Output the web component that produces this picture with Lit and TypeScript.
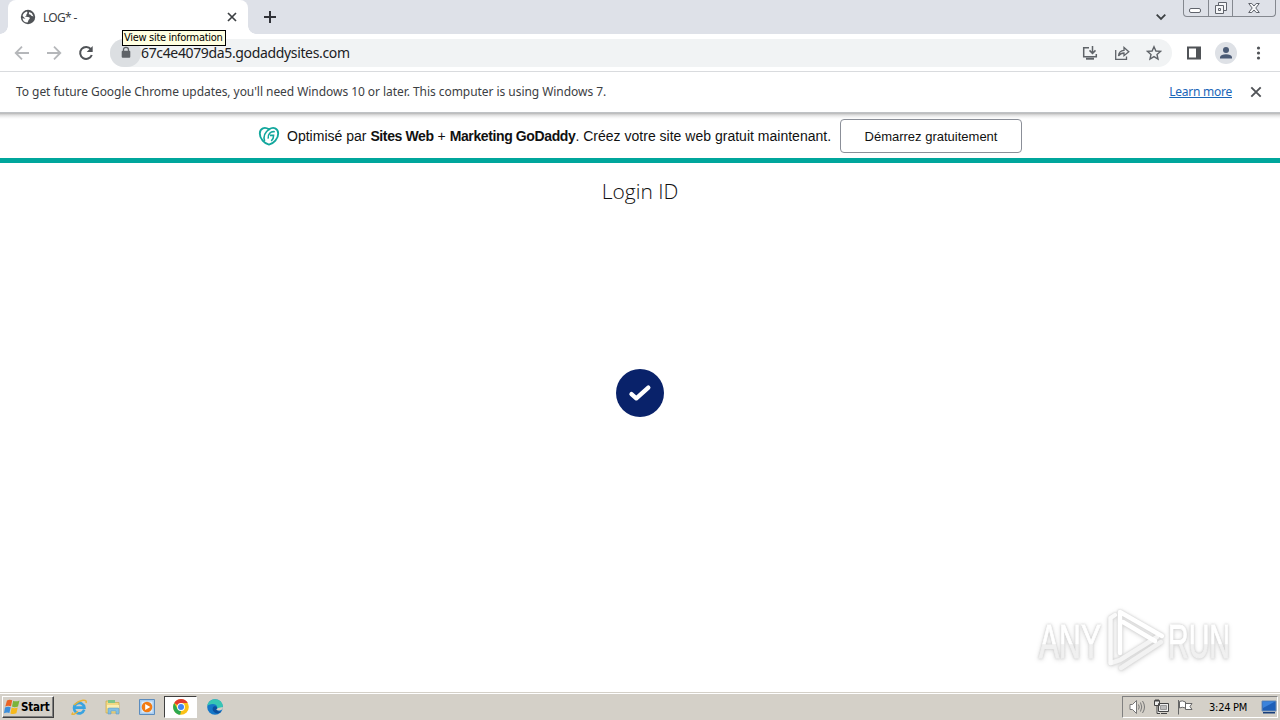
import { LitElement, html, css, svg } from "lit";
import { customElement } from "lit/decorators.js";

/** Page shown in the browser viewport: promo banner, title and check badge. */
@customElement("site-page")
export class SitePage extends LitElement {
  static styles = css`
    :host {
      display: flex;
      flex-direction: column;
      flex: 1;
      min-height: 0;
      background: #fff;
      color: #111;
      font-family: "Liberation Sans", Arial, sans-serif;
    }

    svg {
      display: block;
      flex: none;
    }

    .banner {
      display: flex;
      align-items: center;
      box-sizing: border-box;
      height: 50px;
      padding: 1px 0 0 258px;
      border-bottom: 5px solid #00a69c;
      white-space: nowrap;
      background: linear-gradient(#b4b4b4 0, #dedede 2px, #f3f3f3 4px, #fff 6px);
    }

    .text {
      width: 543px;
      margin-left: 7px;
      font-size: 14px;
      letter-spacing: 0.01px;
    }

    .text b {
      letter-spacing: -0.38px;
    }

    .cta {
      box-sizing: border-box;
      width: 182px;
      height: 34px;
      margin-left: 10px;
      padding: 0;
      border: 1px solid #8b8f98;
      border-radius: 4px;
      background: #fff;
      color: #111;
      font: 13px "Liberation Sans", Arial, sans-serif;
      letter-spacing: 0;
    }

    h1 {
      margin: 14px 0 0;
      text-align: center;
      font: 300 21px/28px "Open Sans", sans-serif;
      letter-spacing: 0;
    }

    .badge {
      margin: 164px auto 0;
    }
  `;

  render() {
    return html`
      <div class="banner">
        <svg width="22" height="20" viewBox="0 0 22 20" fill="none" stroke="#12a79d" stroke-width="1.9">
          <path d="M11 18.6C6.5 17.8 1.6 12.7 1.8 7.4C2 2.2 6.6 .4 11 3.4C15.4 .4 20 2.2 20.2 7.4C20.4 12.7 15.5 17.8 11 18.6Z" />
          <path d="M11 3.4C7 6.2 5.2 10.6 6.6 15M16.8 5.8C12.6 5 9.6 8.4 10.2 12.6M12 9.4H15.6C15.7 11.6 14.8 13.6 13.2 15" stroke-width="1.6" />
        </svg>
        <span class="text">Optimisé par <b>Sites Web</b> + <b>Marketing GoDaddy</b>. Créez votre site web gratuit maintenant.</span>
        <button class="cta">Démarrez gratuitement</button>
      </div>
      <h1>Login ID</h1>
      <svg class="badge" width="48" height="48" viewBox="0 0 48 48">
        <circle cx="24" cy="24" r="24" fill="#09226a" />
        <path d="M15.5 25.2L20.3 29.3L32.3 18.7" fill="none" stroke="#fff" stroke-width="4.4" stroke-linecap="round" stroke-linejoin="round" />
      </svg>
    `;
  }
}

/** Translucent ANY ▷ RUN mark floating over the page. */
@customElement("water-mark")
export class WaterMark extends LitElement {
  static styles = css`
    :host {
      display: flex;
      align-items: center;
      filter: drop-shadow(0 0 1px #ccc) drop-shadow(0 1px 2px #ddd);
      font: 48px/60px "Liberation Sans", Arial, sans-serif;
    }

    .word {
      width: 66px;
      height: 64px;
      overflow: visible;
    }

    text {
      fill: url(#fade);
      stroke: url(#fade);
      stroke-width: 1;
    }

    .play {
      margin: 0 1px 0 2px;
    }
  `;

  private renderWord(word: string) {
    return html`
      <svg class="word" viewBox="0 0 66 64">
        <linearGradient id="fade" x1="0" y1="0" x2="0" y2="1">
          <stop offset=".54" stop-color="#fff" />
          <stop offset=".56" stop-color="#f0f0f0" />
        </linearGradient>
        <text x="1" y="50" textLength="62" lengthAdjust="spacingAndGlyphs">${word}</text>
      </svg>
    `;
  }

  render() {
    return html`
      ${this.renderWord("ANY")}
      <svg class="play" width="60" height="64" viewBox="0 0 60 64" fill="none" stroke-width="4.5" stroke-linejoin="round" stroke-linecap="round">
        <path d="M15 60L55 34" stroke="#f2f2f2" />
        <path d="M5 55L14 52L51 29" stroke="#f4f4f4" />
        <path d="M4.5 55V10L9 7" stroke="#fafafa" />
        <path d="M14 45V4L56 28M17 14L49 33" stroke="#fff" />
      </svg>
      ${this.renderWord("RUN")}
    `;
  }
}

/** Classic grey taskbar with launchers and tray. */
@customElement("task-bar")
export class TaskBar extends LitElement {
  static styles = css`
    :host {
      display: flex;
      align-items: center;
      box-sizing: border-box;
      height: 28px;
      padding: 2px 2px 0 2px;
      background: linear-gradient(#d4d0c8 1px, #fff 1px, #fff 2px, #d4d0c8 2px);
      font: 11px "DejaVu Sans Condensed", "DejaVu Sans", sans-serif;
      color: #000;
    }

    svg {
      display: block;
      flex: none;
    }

    .start {
      display: flex;
      align-items: center;
      gap: 1px;
      box-sizing: border-box;
      width: 52px;
      height: 22px;
      padding: 0 0 0 1px;
      border: 1px solid;
      border-color: #fff #404040 #404040 #fff;
      box-shadow: inset -1px -1px #808080;
      font-weight: bold;
      font-size: 11.5px;
      letter-spacing: -0.2px;
    }

    .apps {
      display: flex;
      align-items: center;
      margin-left: 8px;
      gap: 1px;
    }

    .app {
      display: grid;
      place-items: center;
      box-sizing: border-box;
      width: 33px;
      height: 22px;
    }

    .app.active {
      border: 1px solid;
      border-color: #404040 #fff #fff #404040;
      background: #fff;
    }

    .tray {
      display: flex;
      align-items: center;
      box-sizing: border-box;
      width: 156px;
      height: 22px;
      margin-left: auto;
      padding-left: 6px;
      border: 1px solid;
      border-color: #808080 #fff #fff #808080;
      gap: 7px;
    }

    .clock {
      width: 40px;
      margin-left: 8px;
      letter-spacing: -0.25px;
      white-space: nowrap;
    }

    .desk {
      margin-left: 5px;
    }
  `;

  private icons = [
    svg`<path d="M13.2 10.7A5.2 5.2 0 1 1 13.4 8.6H4" fill="none" stroke="#39a3e0" stroke-width="2.6"/>
      <path d="M2 13.5C-.7 17 3 16 7 12.5M3 6C9 .7 16.5-.5 15 4" fill="none" stroke="#e9b43a" stroke-width="1.5"/>`,
    svg`<path d="M1 2H6L7 3.5H14V14H1Z" fill="#f2d982" stroke="#c9a94c" stroke-width=".7"/>
      <path d="M3 1H10V4H3Z" fill="#7fc58a"/><path d="M2 6H14V9H2Z" fill="#fbedb0"/>
      <path d="M3 15V10Q3 9 4 9H13Q14 9 14 10V15H11V12H6V15Z" fill="#82bfe3" stroke="#5794be" stroke-width=".5"/>`,
    svg`<path d="M.5.5H15.5V15.5H.5Z" fill="#a9cdf0" stroke="#5b8cbe"/>
      <path d="M2.5 2.5H13.5V13.5H2.5Z" fill="#dcebf8"/>
      <circle cx="8" cy="8" r="5.3" fill="#f27b13"/><path d="M6.2 4.9L11.3 8L6.2 11.1Z" fill="#fff"/>`,
    svg`<circle cx="8" cy="8" r="7.8" fill="#fbc116"/>
      <path d="M8 8L1.2 4A7.8 7.8 0 0 1 14.8 4H8Z" fill="#e33b2e"/>
      <path d="M1.2 4L4.6 10L8 12L7.2 15.8A7.8 7.8 0 0 1 1.2 4Z" fill="#2da94f"/>
      <circle cx="8" cy="8" r="3.9" fill="#fff"/><circle cx="8" cy="8" r="3" fill="#4285f4"/>`,
    svg`<circle cx="8" cy="8" r="7.8" fill="#1577c8"/>
      <path d="M.3 7C1 2.5 4.3.2 8 .2C12.6.2 15.8 3.6 15.8 7C15.8 10 13 11 10 10.5C11 8 9.5 5 6 5C3 5 1 6 .3 7Z" fill="#37c6b4"/>
      <path d="M10 10.5C11 8.5 9.3 6.8 7.5 7.2C5.4 7.8 5 10.5 6.6 12.6C8.4 15 11.7 15 14.6 12.4C12 13 9.9 12 10 10.5Z" fill="#0c4f9d"/>
      <path d="M9.2 10.5C10.5 12 13 12 15.6 10.2L15.9 8L11 9Z" fill="#d4d0c8"/>`,
  ];

  render() {
    return html`
      <div class="start">
        <svg width="16" height="16" viewBox="0 0 16 16">
          <path d="M3 1.5Q5.5 0 8.2 1.3L7 7.3Q4 6 1.3 7.5Z" fill="#ea6325" />
          <path d="M9.2 1.7Q12 3 15.5 1.4L14 7.4Q10.8 8.8 8 7.6Z" fill="#7bb43a" />
          <path d="M1 8.6Q4 7 6.7 8.3L5.4 14Q3 12.7 0 14.3Z" fill="#3c8edb" />
          <path d="M7.7 8.6Q10.5 9.8 13.7 8.4L12.4 14.2Q9.2 15.7 6.4 14.4Z" fill="#f6b91c" />
        </svg>
        <span>Start</span>
      </div>
      <div class="apps">
        ${this.icons.map(
          (icon, i) => html`<div class="app ${i === 3 ? "active" : ""}">
            <svg width="16" height="16" viewBox="0 0 16 16">${icon}</svg>
          </div>`
        )}
      </div>
      <div class="tray">
        <svg width="17" height="16" viewBox="0 0 17 16" fill="#fff" stroke="#777">
          <path d="M1 5.5H3.5L7.5 1.5V14.5L3.5 10.5H1Z" />
          <path d="M9.5 5.5Q11 8 9.5 10.5M11.5 3.5Q14 8 11.5 12.5M13.5 2Q17.5 8 13.5 14" fill="none" />
        </svg>
        <svg width="17" height="16" viewBox="0 0 17 16" fill="#eee" stroke="#444">
          <path d="M5.5 4.5H15.5V12.5H5.5ZM8 14.5H14M1.5 1.5H6.5V6.5H1.5ZM3 0V3M5 0V3M4 6.5V14.5H7" />
          <path d="M7.5 6.5H13.5V10.5H7.5Z" fill="#bbb" stroke="#999" />
        </svg>
        <svg width="17" height="16" viewBox="0 0 17 16" fill="#fff" stroke="#666">
          <path d="M1.5 1V15.5M2.5 2.5Q5 1 8.5 3V9Q5 7.5 2.5 9ZM8.5 4.5H15L13 7.5L15 10.5H8.5Z" />
        </svg>
        <span class="clock">3:24 PM</span>
        <svg class="desk" width="16" height="14" viewBox="0 0 16 14">
          <path d="M1 1H15V11H1Z" fill="#1e5fb8" stroke="#6d8db5" />
          <path d="M1.5 1.5H14L2 8Z" fill="#3b83dc" />
          <path d="M2 12H14V13.5H2Z" fill="#173e7a" />
        </svg>
      </div>
    `;
  }
}

@customElement("app-root")
export class AppRoot extends LitElement {
  static styles = css`
    :host {
      position: relative;
      display: flex;
      flex-direction: column;
      width: 1280px;
      height: 720px;
      overflow: hidden;
      background: #fff;
      color: #3c4043;
      font-family: "Noto Sans", sans-serif;
      white-space: nowrap;
    }

    svg {
      display: block;
      flex: none;
    }

    .tabs {
      display: flex;
      height: 34px;
      padding-left: 8px;
      background: #dee1e8;
    }

    .tab {
      position: relative;
      display: flex;
      align-items: center;
      box-sizing: border-box;
      width: 240px;
      padding: 0 10px 0 12px;
      border-radius: 8px 8px 0 0;
      background: #fff;
      font-size: 12px;
      letter-spacing: -0.7px;
    }

    .tab::before,
    .tab::after {
      content: "";
      position: absolute;
      bottom: 0;
      width: 8px;
      height: 8px;
    }

    .tab::before {
      left: -8px;
      background: radial-gradient(circle at 0 0, transparent 7.5px, #fff 8px);
    }

    .tab::after {
      right: -8px;
      background: radial-gradient(circle at 100% 0, transparent 7.5px, #fff 8px);
    }

    .title {
      flex: 1;
      margin-left: 7px;
    }

    .plus {
      margin: 10px 0 0 15px;
    }

    .chevron {
      margin: 11px 16px 0 auto;
    }

    .controls {
      display: flex;
      box-sizing: border-box;
      width: 93px;
      height: 17px;
      margin-right: 4px;
      border: 1px solid #84888f;
      border-top: 0;
      border-radius: 0 0 4px 4px;
    }

    .control {
      display: grid;
      place-items: center;
      width: 24px;
      border-right: 1px solid #84888f;
    }

    .control:last-child {
      width: 42px;
      border: 0;
    }

    .toolbar {
      display: flex;
      align-items: center;
      box-sizing: border-box;
      height: 38px;
      padding: 0 13px 0 14px;
      border-bottom: 1px solid #d9dbde;
    }

    .nav {
      display: flex;
      gap: 16px;
    }

    .address {
      display: flex;
      align-items: center;
      box-sizing: border-box;
      width: 1062px;
      height: 28px;
      margin-left: 16px;
      padding-right: 10px;
      border-radius: 14px;
      background: #f1f3f4;
      color: #202124;
    }

    .lock {
      display: grid;
      place-items: center;
      width: 31px;
      height: 28px;
      border-radius: 14px;
      background: #dcdfe2;
    }

    .url {
      flex: 1;
      font-size: 14px;
      letter-spacing: -0.35px;
    }

    .actions {
      display: flex;
      gap: 16px;
    }

    .panel {
      margin-left: 14px;
    }

    .avatar {
      margin-left: 13px;
    }

    .menu {
      margin: 0 0 0 auto;
    }

    .infobar {
      display: flex;
      align-items: center;
      box-sizing: border-box;
      height: 41px;
      padding: 0 18px 0 16px;
      border-bottom: 1px solid #bfc2c5;
      font-size: 12px;
    }

    .message {
      flex: 1;
      padding-bottom: 2px;
      letter-spacing: -0.052px;
    }

    .link {
      margin-right: 18px;
      padding-bottom: 2px;
      color: #1a66b8;
      letter-spacing: -0.25px;
      text-decoration: underline;
    }

    .tooltip {
      position: absolute;
      left: 122px;
      top: 30px;
      box-sizing: border-box;
      width: 104px;
      height: 16px;
      padding-left: 1px;
      border: 1px solid #000;
      background: #ffffe1;
      color: #000;
      font: 11px/14px "DejaVu Sans Condensed", "DejaVu Sans", sans-serif;
      letter-spacing: -0.3px;
    }

    .mark {
      position: absolute;
      left: 1038px;
      top: 608px;
    }
  `;

  private renderTabs() {
    return html`
      <div class="tabs">
        <div class="tab">
          <svg width="16" height="16" viewBox="0 0 16 16">
            <circle cx="8" cy="8" r="7.2" fill="#505357" />
            <path d="M7 2.4Q8.2 4 6.5 5.2Q7 7 4.8 7.5L9.4 8.2Q10.5 9.8 8.7 10.7L7.6 13.6Q3 13.4 2.5 9.2L5.5 9.7L2.6 7Q3 3.5 7 2.4ZM9.2 3L11.8 4.2L13.5 7.6L11.4 6.8L10.2 5.6L8.8 5.2Z" fill="#fff" />
          </svg>
          <span class="title">LOG* -</span>
          <svg width="12" height="12" viewBox="0 0 12 12" stroke="#3c4043" stroke-width="1.7">
            <path d="M2 2L10 10M10 2L2 10" />
          </svg>
        </div>
        <svg class="plus" width="14" height="14" viewBox="0 0 14 14" stroke="#303238" stroke-width="2">
          <path d="M7 1V13M1 7H13" />
        </svg>
        <svg class="chevron" width="12" height="12" viewBox="0 0 12 12" fill="none" stroke="#3c4043" stroke-width="1.8">
          <path d="M1.7 3.7L6 8L10.3 3.7" />
        </svg>
        <div class="controls">
          <div class="control">
            <svg width="13" height="16" viewBox="0 0 13 16" fill="#fff" stroke="#60646c">
              <rect x=".5" y="8.5" width="11" height="4" rx="1.5" />
            </svg>
          </div>
          <div class="control">
            <svg width="14" height="16" viewBox="0 0 14 16" fill="#f5f6f8" stroke="#60646c">
              <path d="M4.5 2.5H12.5V10.5H4.5Z" />
              <path d="M1.5 5.5H9.5V13.5H1.5ZM4.5 8.5H6.5V10.5H4.5Z" />
            </svg>
          </div>
          <div class="control">
            <svg width="12" height="16" viewBox="0 0 12 16" fill="#f5f6f8" stroke="#60646c">
              <path d="M.7 3.5H3.8L6 6L8.2 3.5H11.3L7.8 8L11.3 12.5H8.2L6 10L3.8 12.5H.7L4.2 8Z" />
            </svg>
          </div>
        </div>
      </div>
    `;
  }

  private renderToolbar() {
    return html`
      <div class="toolbar">
        <div class="nav">
          <svg width="16" height="16" viewBox="0 0 16 16" fill="none" stroke="#b5b7ba" stroke-width="1.8">
            <path d="M15 8H2M8 1.7L1.7 8L8 14.3" />
          </svg>
          <svg width="16" height="16" viewBox="0 0 16 16" fill="none" stroke="#b5b7ba" stroke-width="1.8">
            <path d="M1 8H14M8 1.7L14.3 8L8 14.3" />
          </svg>
          <svg width="16" height="16" viewBox="0 0 16 16">
            <path d="M12.9 4.2A6 6 0 1 0 13.8 10" fill="none" stroke="#505357" stroke-width="2" />
            <path d="M14.7 1V7H8.7Z" fill="#505357" />
          </svg>
        </div>
        <div class="address">
          <span class="lock">
            <svg width="10" height="13" viewBox="0 0 10 13">
              <path d="M2.5 6V3.8Q2.5 1.3 5 1.3Q7.5 1.3 7.5 3.8V6" fill="none" stroke="#5f6368" stroke-width="1.3" />
              <rect x=".7" y="4.8" width="8.6" height="7" rx="1" fill="#5f6368" />
            </svg>
          </span>
          <span class="url">67c4e4079da5.godaddysites.com</span>
          <div class="actions">
            <svg width="16" height="16" viewBox="0 0 16 16" fill="none" stroke="#5f6368" stroke-width="1.5">
              <path d="M7 2.7H1.7V11.7H14.3V9M10.5 1V8M7.5 5.4L10.5 8.4L13.5 5.4" />
              <path d="M4 13.7H12" stroke-width="2" />
            </svg>
            <svg width="16" height="16" viewBox="0 0 16 16" fill="none" stroke="#5f6368" stroke-width="1.3">
              <path d="M1.7 5V14.3H12.5V11.5M4.5 11Q5 5.5 10 5.3V2.5L14.8 6.7L10 10.7V8Q6.5 8 4.5 11Z" />
            </svg>
            <svg width="16" height="16" viewBox="0 0 16 16" fill="none" stroke="#5f6368" stroke-width="1.4">
              <path d="M8 1.8L9.9 6L14.5 6.4L11 9.5L12 14L8 11.6L4 14L5 9.5L1.5 6.4L6.1 6Z" />
            </svg>
          </div>
        </div>
        <svg class="panel" width="16" height="16" viewBox="0 0 16 16">
          <path d="M1 1.5H15V14.5H1ZM3 3.5V12.5H10V3.5Z" fill="#505357" fill-rule="evenodd" />
        </svg>
        <svg class="avatar" width="22" height="22" viewBox="0 0 22 22">
          <circle cx="11" cy="11" r="11" fill="#dee1e6" />
          <circle cx="11" cy="8" r="3" fill="#4b5b75" />
          <path d="M5 16.5V15Q6 12.3 11 12.3Q16 12.3 17 15V16.5Z" fill="#4b5b75" />
        </svg>
        <svg class="menu" width="16" height="16" viewBox="0 0 16 16" fill="#505357">
          <circle cx="7.5" cy="3" r="1.6" />
          <circle cx="7.5" cy="8" r="1.6" />
          <circle cx="7.5" cy="13" r="1.6" />
        </svg>
      </div>
    `;
  }

  render() {
    return html`
      ${this.renderTabs()} ${this.renderToolbar()}
      <div class="infobar">
        <span class="message">To get future Google Chrome updates, you'll need Windows 10 or later. This computer is using Windows 7.</span>
        <span class="link">Learn more</span>
        <svg width="12" height="12" viewBox="0 0 12 12" stroke="#505357" stroke-width="1.9">
          <path d="M1.3 1.3L10.7 10.7M10.7 1.3L1.3 10.7" />
        </svg>
      </div>
      <site-page></site-page>
      <task-bar></task-bar>
      <div class="tooltip">View site information</div>
      <water-mark class="mark"></water-mark>
    `;
  }
}

declare global {
  interface HTMLElementTagNameMap {
    "app-root": AppRoot;
    "site-page": SitePage;
    "task-bar": TaskBar;
    "water-mark": WaterMark;
  }
}
